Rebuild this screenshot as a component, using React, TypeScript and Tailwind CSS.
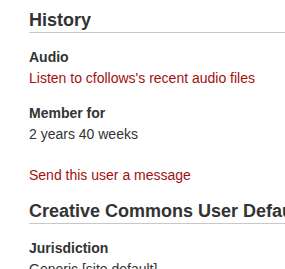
const sections = [
  {
    heading: "History",
    items: [
      { label: "Audio", value: "Listen to cfollows's recent audio files", link: true },
      { label: "Member for", value: "2 years 40 weeks", link: false },
    ],
    footer: "Send this user a message",
  },
  {
    heading: "Creative Commons User Default License",
    items: [{ label: "Jurisdiction", value: "Generic [site default]", link: false }],
    footer: null,
  },
];

export default function App() {
  return (
    <div
      className="h-[269px] w-[285px] overflow-hidden bg-white pl-[29px] text-[14px] leading-[21px] text-[#333]"
      style={{ fontFamily: '"Liberation Sans", Arial, sans-serif' }}
    >
      {sections.map((section, index) => (
        <section key={section.heading} className={index === 0 ? "pt-[9px]" : "mt-[14px]"}>
          <h2 className="whitespace-nowrap border-b border-[#c8c8c8] text-[18px] font-bold leading-[23px] text-[#333]">
            {section.heading}
          </h2>
          <dl>
            {section.items.map((item) => (
              <div key={item.label} className="mt-[14px]">
                <dt className="font-bold">{item.label}</dt>
                <dd className={item.link ? "text-[#a20f0f]" : ""}>{item.value}</dd>
              </div>
            ))}
          </dl>
          {section.footer && (
            <p className="mt-[20px] text-[#a20f0f]">{section.footer}</p>
          )}
        </section>
      ))}
    </div>
  );
}
